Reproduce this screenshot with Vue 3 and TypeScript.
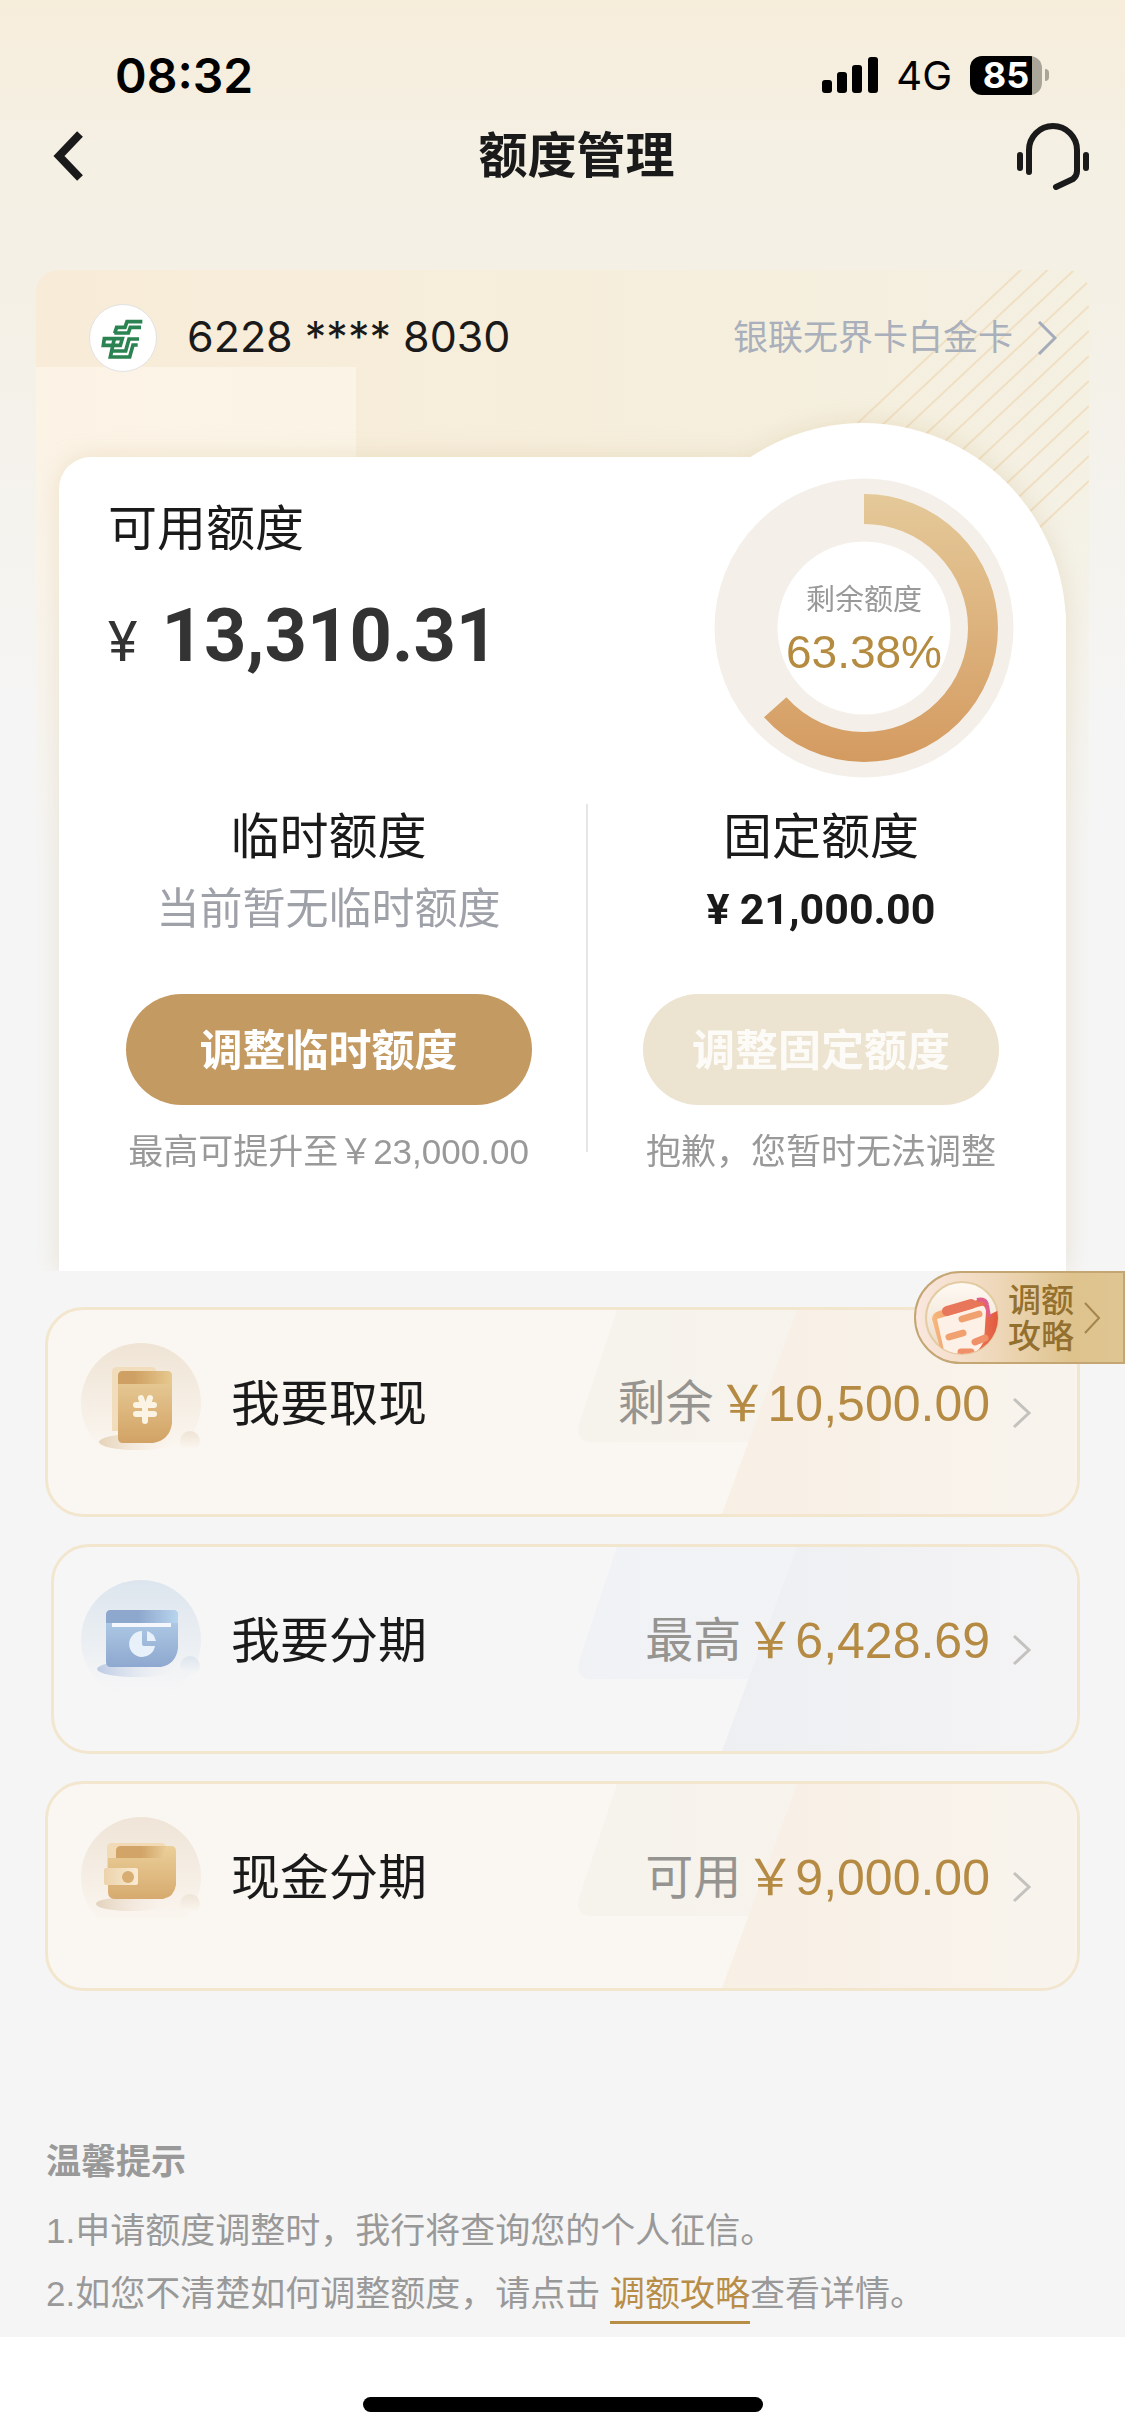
<script setup lang="ts">
import { computed, ref } from 'vue'

interface Entry {
  id: 'cash' | 'split' | 'wallet'
  title: string
  label: string
  amount: string
  tone: 'gold' | 'blue'
}

const cardNumber = ref('6228 **** 8030')
const cardName = ref('银联无界卡白金卡')
const available = ref('13,310.31')
const remaining = ref(63.38)

const entries: Entry[] = [
  { id: 'cash', title: '我要取现', label: '剩余', amount: '10,500.00', tone: 'gold' },
  { id: 'split', title: '我要分期', label: '最高', amount: '6,428.69', tone: 'blue' },
  { id: 'wallet', title: '现金分期', label: '可用', amount: '9,000.00', tone: 'gold' },
]

const rays = Array.from({ length: 12 }, (_, i) => -64 + i * 25)

const ringLength = 2 * Math.PI * 119
const ringDash = computed(() => `${(ringLength * remaining.value) / 100} ${ringLength}`)
</script>

<template>
  <div class="page">
    <div class="status">
      <span class="clock">08:32</span>
      <div class="signals">
        <svg class="bars" width="56" height="36" viewBox="0 0 56 36" aria-hidden="true">
          <rect x="0" y="23" width="10" height="13" rx="3" />
          <rect x="15" y="15" width="10" height="21" rx="3" />
          <rect x="30" y="8" width="10" height="28" rx="3" />
          <rect x="46" y="0" width="10" height="36" rx="3" />
        </svg>
        <span class="network">4G</span>
        <div class="battery">
          <span class="battery-body">85</span>
          <span class="battery-tip"></span>
        </div>
      </div>
    </div>

    <header class="nav">
      <button class="nav-back" type="button" aria-label="返回">
        <svg width="32" height="52" viewBox="0 0 32 52" aria-hidden="true">
          <path d="M28 4 L7 26 L28 48" fill="none" stroke="#1a1a1a" stroke-width="8" />
        </svg>
      </button>
      <h1 class="nav-title">额度管理</h1>
      <button class="nav-service" type="button" aria-label="客服">
        <svg width="74" height="68" viewBox="0 0 74 68" fill="none" stroke="#1a1a1a" stroke-linecap="round" stroke-linejoin="round" aria-hidden="true">
          <path d="M13 50 V28 a24 24 0 0 1 48 0 V49 q0 5 -4 8 L40 65" stroke-width="6" />
          <path d="M4 33 V46 M70 33 V46" stroke-width="6" />
        </svg>
      </button>
    </header>

    <main>
      <section class="panel">
        <svg class="rays" width="260" height="290" viewBox="0 0 260 290" aria-hidden="true">
          <line v-for="y in rays" :key="y" x1="260" :y1="y" x2="0" :y2="y + 244" stroke="#f0dfc3" stroke-width="2" />
        </svg>

        <div class="panel-head">
          <span class="bank-logo">
            <svg width="64" height="64" viewBox="20 20 192 192" fill="none" stroke="#2a8350" stroke-width="11" aria-hidden="true">
              <path d="M174 67 H128 L122 84 H97 L91 102" />
              <path d="M170 84 H138 L132 101 H90" />
              <path d="M60 118 H114 L108 138 H57 Z" />
              <path d="M164 119 H134 L124 155 H84" />
              <path d="M160 137 H146 L136 173 H78 L90 118" />
            </svg>
          </span>
          <span class="card-number">{{ cardNumber }}</span>
          <a class="card-name" href="#card">
            <span>{{ cardName }}</span>
            <svg width="20" height="34" viewBox="0 0 20 34" aria-hidden="true">
              <path d="M2 1 L18 17 L2 33" fill="none" stroke="#a4abba" stroke-width="3" />
            </svg>
          </a>
        </div>

        <div class="card">
          <div class="summary">
            <div class="summary-text">
              <h2 class="heading">可用额度</h2>
              <p class="available"><span class="yen">¥</span>{{ available }}</p>
            </div>
            <div class="ring">
              <svg class="ring-art" viewBox="0 0 300 300" aria-hidden="true">
                <defs>
                  <linearGradient id="ringFill" gradientUnits="userSpaceOnUse" x1="0" y1="0" x2="300" y2="0">
                    <stop offset="0" stop-color="#d3985d" />
                    <stop offset="1" stop-color="#e6cc9d" />
                  </linearGradient>
                </defs>
                <circle cx="150" cy="150" r="118" fill="none" stroke="#f4f0e9" stroke-width="63" />
                <circle cx="150" cy="150" r="119" fill="none" stroke="url(#ringFill)" stroke-width="30" :stroke-dasharray="ringDash" transform="rotate(-90 150 150)" />
              </svg>
              <span class="ring-label">剩余额度</span>
              <strong class="ring-value">{{ remaining }}%</strong>
            </div>
          </div>

          <div class="quotas">
            <div class="quota">
              <h2 class="heading">临时额度</h2>
              <p class="quota-empty">当前暂无临时额度</p>
              <button class="pill pill-wide" type="button">调整临时额度</button>
              <p class="quota-note">最高可提升至￥23,000.00</p>
            </div>
            <div class="divider"></div>
            <div class="quota">
              <h2 class="heading">固定额度</h2>
              <p class="quota-value"><span class="quota-yen">¥</span>21,000.00</p>
              <button class="pill" type="button" disabled>调整固定额度</button>
              <p class="quota-note">抱歉，您暂时无法调整</p>
            </div>
          </div>
        </div>
      </section>

      <section class="entries">
        <a v-for="entry in entries" :key="entry.id" class="entry" :class="entry.tone" :href="`#${entry.id}`">
          <svg class="entry-decor" width="504" height="204" viewBox="0 0 504 204" aria-hidden="true">
            <defs>
              <linearGradient :id="`${entry.id}Near`" x1="0" x2="1">
                <stop offset="0" :stop-color="entry.tone === 'gold' ? '#f6f2ec' : '#f0f2f5'" />
                <stop offset="1" :stop-color="entry.tone === 'gold' ? '#f8f4ed' : '#f4f4f5'" />
              </linearGradient>
              <linearGradient :id="`${entry.id}Far`" x1="0" x2="1">
                <stop offset="0" :stop-color="entry.tone === 'gold' ? '#f8efe5' : '#edeff2'" />
                <stop offset="1" :stop-color="entry.tone === 'gold' ? '#f8f4ed' : '#f5f4f5'" />
              </linearGradient>
            </defs>
            <path d="M44 0 L6 114 Q2 132 18 132 H504 V0 Z" :fill="`url(#${entry.id}Near)`" />
            <path d="M224 0 L149 204 H504 V0 Z" :fill="`url(#${entry.id}Far)`" />
          </svg>

          <svg v-if="entry.id === 'cash'" class="entry-icon" viewBox="0 0 120 120" aria-hidden="true">
            <defs>
              <linearGradient id="cashDisc" x2="0" y2="1"><stop stop-color="#efe4d5" /><stop offset=".8" stop-color="#f9f4ed" /><stop offset="1" stop-color="#fbf8f3" stop-opacity="0" /></linearGradient>
              <linearGradient id="cashBody" x2="0" y2="1"><stop stop-color="#e9cf9c" /><stop offset="1" stop-color="#d2a264" /></linearGradient>
              <linearGradient id="cashFlap"><stop offset=".3" stop-color="#cfa063" /><stop offset="1" stop-color="#e6c98f" /></linearGradient>
              <linearGradient id="cashShade"><stop stop-color="#e6d3b9" /><stop offset="1" stop-color="#f9ece2" stop-opacity="0" /></linearGradient>
            </defs>
            <circle cx="60" cy="60" r="60" fill="url(#cashDisc)" />
            <ellipse cx="56" cy="99" rx="38" ry="8" fill="url(#cashShade)" />
            <circle cx="109" cy="98" r="10" fill="url(#cashDisc)" />
            <path d="M36 24 H70 Q75 24 75 29 V88 H31 V29 Q31 24 36 24 Z" fill="#f1dcbc" />
            <path d="M42 28 H86 Q91 28 91 33 V80 Q89 97 72 100 H42 Q37 100 37 95 V33 Q37 28 42 28 Z" fill="url(#cashBody)" />
            <path d="M42 28 H86 Q91 28 91 33 V41 H37 V33 Q37 28 42 28 Z" fill="url(#cashFlap)" />
            <path d="M60 55 L62 61 M69 55 L67 61 M55 62 H73 M55 71 H73 M64 62 V78" fill="none" stroke="#fbf3e4" stroke-width="6" stroke-linecap="round" />
          </svg>

          <svg v-else-if="entry.id === 'split'" class="entry-icon" viewBox="0 0 120 120" aria-hidden="true">
            <defs>
              <linearGradient id="splitDisc" x2="0" y2="1"><stop stop-color="#dce5ee" /><stop offset=".7" stop-color="#f0f2f4" /><stop offset="1" stop-color="#f5f5f5" stop-opacity="0" /></linearGradient>
              <linearGradient id="splitBody" x2="0" y2="1"><stop stop-color="#b5d0ea" /><stop offset="1" stop-color="#8ea8cf" /></linearGradient>
              <linearGradient id="splitFlap"><stop offset=".45" stop-color="#8ea7cd" /><stop offset="1" stop-color="#b8d5ee" /></linearGradient>
              <linearGradient id="splitShade"><stop stop-color="#bccae4" /><stop offset="1" stop-color="#eef0f5" stop-opacity="0" /></linearGradient>
            </defs>
            <circle cx="60" cy="60" r="60" fill="url(#splitDisc)" />
            <ellipse cx="56" cy="89" rx="40" ry="8" fill="url(#splitShade)" />
            <circle cx="109" cy="86" r="10" fill="url(#splitDisc)" />
            <path d="M30 30 H92 Q97 30 97 35 V68 Q95 84 80 87 H30 Q25 87 25 82 V35 Q25 30 30 30 Z" fill="url(#splitBody)" />
            <path d="M30 30 H92 Q97 30 97 35 V43 H25 V35 Q25 30 30 30 Z" fill="url(#splitFlap)" />
            <rect x="31" y="43" width="59" height="4" fill="#f4f8fc" />
            <path d="M61 51 A13 13 0 1 0 74 66 H63 Q61 66 61 64 Z" fill="#e8f0f9" />
            <path d="M66 51 Q73 53 75 61 H66 Z" fill="#e8f0f9" />
          </svg>

          <svg v-else class="entry-icon" viewBox="0 0 120 120" aria-hidden="true">
            <defs>
              <linearGradient id="walletDisc" x2="0" y2="1"><stop stop-color="#efe4d7" /><stop offset=".8" stop-color="#f9f4ed" /><stop offset="1" stop-color="#fbf8f3" stop-opacity="0" /></linearGradient>
              <linearGradient id="walletBody" x2="0" y2="1"><stop stop-color="#ebcf99" /><stop offset="1" stop-color="#d6aa6f" /></linearGradient>
              <linearGradient id="walletSlot"><stop offset=".5" stop-color="#d2a467" /><stop offset="1" stop-color="#e9cd98" /></linearGradient>
              <linearGradient id="walletClasp"><stop stop-color="#ecd3ab" /><stop offset="1" stop-color="#f8ead3" /></linearGradient>
              <linearGradient id="walletShade"><stop stop-color="#e2d2bb" /><stop offset="1" stop-color="#f9e8e2" stop-opacity="0" /></linearGradient>
            </defs>
            <circle cx="60" cy="60" r="60" fill="url(#walletDisc)" />
            <ellipse cx="50" cy="87" rx="35" ry="7" fill="url(#walletShade)" />
            <circle cx="109" cy="87" r="10" fill="url(#walletDisc)" />
            <path d="M31 26 H80 Q85 26 85 31 V60 H26 V31 Q26 26 31 26 Z" fill="#f2dab7" />
            <path d="M27 41 H35 V34 Q35 29 40 29 H90 Q95 29 95 34 V68 Q93 80 82 82 H34 Q27 82 27 75 Z" fill="url(#walletBody)" />
            <path d="M35 41 V34 Q35 29 40 29 H86 L80 41 Z" fill="url(#walletSlot)" />
            <rect x="23" y="51" width="34" height="17" rx="2" fill="url(#walletClasp)" />
            <circle cx="47" cy="60" r="6" fill="#d8ad72" />
          </svg>

          <span class="entry-title">{{ entry.title }}</span>
          <span class="entry-label">{{ entry.label }}</span>
          <span class="entry-amount">￥{{ entry.amount }}</span>
          <svg class="entry-arrow" width="20" height="32" viewBox="0 0 20 32" aria-hidden="true">
            <path d="M2 2 L17 16 L2 30" fill="none" stroke="#c4c2be" stroke-width="3" />
          </svg>
        </a>

        <a class="guide" href="#guide">
          <svg class="guide-icon" viewBox="0 0 74 74" aria-hidden="true">
            <defs>
              <linearGradient id="guideDisc" x2="0" y2="1"><stop stop-color="#fffaf5" /><stop offset="1" stop-color="#ead9c4" /></linearGradient>
              <linearGradient id="guideSheet"><stop stop-color="#f7b97e" /><stop offset="1" stop-color="#e2573f" /></linearGradient>
              <clipPath id="guideClip"><circle cx="37" cy="37" r="36" /></clipPath>
            </defs>
            <circle cx="37" cy="37" r="36" fill="url(#guideDisc)" stroke="#e3cba2" stroke-width="2" />
            <g clip-path="url(#guideClip)">
              <path d="M52 19 Q61 17 62 24 L64 34 L74 29 V56 L58 74 H17 L7 38 Q7 32 14 30 Z" fill="url(#guideSheet)" />
              <path d="M52 19 Q61 17 62 24 L64 36" fill="none" stroke="#e0608a" stroke-width="4" />
              <path d="M12 38 L56 25 Q60 24 61 30 L59 60 Q52 74 44 74 H20 Z" fill="#fdf1e7" />
              <g fill="none" stroke-linecap="round">
                <path d="M22 30 L46 23" stroke="#e8765a" stroke-width="10" />
                <path d="M37 38 L54 33 M24 56 L38 52" stroke="#f1a070" stroke-width="7" />
                <path d="M50 61 L60 57 M36 71 L46 71" stroke="#ef9068" stroke-width="7" />
              </g>
            </g>
          </svg>
          <span class="guide-text">调额<br />攻略</span>
          <svg width="18" height="32" viewBox="0 0 18 32" aria-hidden="true">
            <path d="M2 1 L16 16 L2 31" fill="none" stroke="#a3854d" stroke-width="2" />
          </svg>
        </a>
      </section>

      <section class="tips">
        <h3 class="tips-title">温馨提示</h3>
        <p>1.申请额度调整时，我行将查询您的个人征信。</p>
        <p>2.如您不清楚如何调整额度，请点击 <a href="#guide">调额攻略</a>查看详情。</p>
      </section>
    </main>

    <footer class="home"><span class="home-bar"></span></footer>
  </div>
</template>

<style>
body {
  background: #fff;
}
</style>

<style scoped>
.page {
  font-family: "Liberation Sans", "Noto Sans CJK SC", sans-serif;
  color: #1a1a1a;
  background: linear-gradient(#f7eddb 0, #f4f0e4 160px, #f4f0e5 280px, #f5f5f5 720px);
}

h1, h2, h3, p {
  margin: 0;
  font-weight: 400;
}

a {
  color: inherit;
  text-decoration: none;
}

button {
  padding: 0;
  border: 0;
  background: none;
  font-family: inherit;
}

.status {
  display: flex;
  align-items: center;
  justify-content: space-between;
  height: 66px;
  padding: 42px 76px 0 115px;
  font-family: Inter, sans-serif;
  color: #000;
}

.clock {
  font-size: 48px;
  font-weight: 600;
}

.signals {
  display: flex;
  align-items: center;
  gap: 18px;
}

.network {
  font-size: 40px;
}

.battery {
  display: flex;
  align-items: center;
  gap: 3px;
}

.battery-body {
  width: 72px;
  height: 39px;
  border-radius: 12px;
  background: linear-gradient(90deg, #000 62px, #aaa599 62px);
  color: #fff;
  font-size: 36px;
  font-weight: 700;
  line-height: 39px;
  text-align: center;
}

.battery-tip {
  width: 4px;
  height: 12px;
  border-radius: 0 4px 4px 0;
  background: #aaa599;
}

.nav {
  display: flex;
  align-items: center;
  height: 96px;
}

.nav-back {
  width: 128px;
  height: 96px;
  padding-left: 52px;
  text-align: left;
}

.nav-back svg,
.nav-service svg {
  display: block;
}

.nav-title {
  flex: 1;
  font-size: 49px;
  font-weight: 700;
  line-height: 72px;
  text-align: center;
}

.nav-service {
  width: 100px;
  padding-right: 26px;
}

.nav-service svg {
  margin-left: -9px;
}

.panel {
  position: relative;
  margin: 66px 36px 0;
  padding: 0 23px;
  overflow: hidden;
  border-radius: 22px 22px 0 0;
  background:
    linear-gradient(rgba(245, 245, 245, 0) 160px, #f5f5f5 600px),
    linear-gradient(rgba(255, 250, 242, 0.5), rgba(255, 250, 242, 0.5)) 0 97px / 320px 100% no-repeat,
    linear-gradient(90deg, #f8ecd8, #f6eedb 50%, #f4f0e2);
}

.rays {
  position: absolute;
  top: 0;
  right: 0;
}

.panel-head {
  position: relative;
  display: flex;
  align-items: center;
  height: 136px;
  margin-bottom: 51px;
  padding: 0 9px 0 30px;
}

.bank-logo {
  display: flex;
  align-items: center;
  justify-content: center;
  width: 66px;
  height: 66px;
  border: 1px solid #e2e2e2;
  border-radius: 50%;
  background: #fff;
}

.card-number {
  flex: 1;
  margin-left: 30px;
  padding-bottom: 4px;
  font-family: Inter, sans-serif;
  font-size: 43px;
}

.card-name {
  display: flex;
  align-items: center;
  gap: 24px;
  color: #a9afbb;
  font-size: 35px;
}

.card-name span {
  padding-bottom: 8px;
}

.card {
  position: relative;
  border-radius: 32px 203px 0 0 / 32px 169px 0 0;
  background: #fff;
  filter: drop-shadow(0 0 12px rgba(190, 160, 90, 0.22));
}

.card::before {
  content: "";
  position: absolute;
  top: -34px;
  right: 0;
  width: 406px;
  height: 406px;
  border-radius: 50%;
  background: #fff;
}

.summary {
  position: relative;
  display: flex;
  justify-content: space-between;
  padding: 21px 52px 26px 49px;
}

.summary-text {
  padding-top: 18px;
}

.heading {
  font-size: 49px;
  line-height: 66px;
}

.available {
  margin-top: 26px;
  color: #333;
  font-family: Roboto, sans-serif;
  font-size: 74px;
  font-weight: 700;
  line-height: 96px;
}

.yen {
  margin-right: 24px;
  font-size: 56px;
  font-weight: 400;
}

.ring {
  position: relative;
  display: flex;
  flex-direction: column;
  align-items: center;
  justify-content: center;
  width: 300px;
  height: 300px;
}

.ring-art {
  position: absolute;
  inset: 0;
}

.ring-label {
  position: relative;
  color: #999;
  font-size: 29px;
  line-height: 48px;
}

.ring-value {
  position: relative;
  color: #b58b40;
  font-size: 46px;
  font-weight: 400;
  line-height: 56px;
}

.quotas {
  position: relative;
  display: grid;
  grid-template-columns: minmax(0, 21fr) 2px minmax(0, 19fr);
  padding: 0 12px 95px;
}

.quota {
  display: flex;
  flex-direction: column;
  align-items: center;
}

.divider {
  margin-bottom: 24px;
  background: #e6e6e6;
}

.quota-empty,
.quota-value {
  margin: 9px 0 55px;
  line-height: 60px;
}

.quota-empty {
  color: #9fa1a9;
  font-size: 43px;
}

.quota-value {
  font-family: Roboto, sans-serif;
  font-size: 43px;
  font-weight: 700;
}

.quota-yen {
  margin-right: 10px;
}

.pill {
  width: 356px;
  height: 111px;
  padding-bottom: 6px;
  border-radius: 56px;
  background: #c49a63;
  color: #fff;
  font-size: 43px;
  font-weight: 700;
}

.pill-wide {
  width: 406px;
}

.pill:disabled {
  background: #ece3d0;
  color: #fdfbf7;
}

.quota-note {
  margin-top: 23px;
  color: #999;
  font-size: 35px;
  line-height: 48px;
}

.entries {
  position: relative;
  display: flex;
  flex-direction: column;
  gap: 27px;
  padding: 36px 45px 0;
}

.entry {
  position: relative;
  display: flex;
  align-items: center;
  height: 118px;
  padding: 34px 45px 52px 33px;
  overflow: hidden;
  border: 3px solid #f2e6cf;
  border-radius: 38px;
  background: #faf7f2;
}

.entry.blue {
  margin-left: 6px;
  padding-left: 27px;
  background: #f6f6f7;
}

.entry > * {
  position: relative;
}

.entry > .entry-decor {
  position: absolute;
  top: 0;
  right: 0;
}

.entry-icon {
  width: 120px;
  height: 120px;
}

.entry-title,
.entry-label,
.entry-amount {
  padding-bottom: 8px;
}

.entry-title {
  flex: 1;
  margin-left: 30px;
  font-size: 49px;
}

.entry-label {
  margin-right: 4px;
  color: #969490;
  font-size: 48px;
}

.entry-amount {
  margin-right: 22px;
  color: #b58b43;
  font-size: 50px;
}

.entry-arrow {
  margin-top: 20px;
}

.guide {
  position: absolute;
  top: 0;
  right: 0;
  display: flex;
  align-items: center;
  gap: 9px;
  height: 89px;
  padding: 0 22px 0 9px;
  border: 2px solid #c3a673;
  border-radius: 47px 0 0 47px;
  background: linear-gradient(90deg, #fae7de, #eed7b8 40%, #dec38d 75%, #dfc592);
  color: #94702f;
}

.guide-icon {
  width: 74px;
  height: 74px;
}

.guide-text {
  padding-top: 2px;
  font-size: 33px;
  font-weight: 500;
  line-height: 36px;
}

.tips {
  margin-top: 139px;
  padding: 0 46px 12px;
  color: #999;
  font-size: 35px;
  line-height: 63px;
}

.tips-title {
  margin-bottom: 6px;
  font-size: 35px;
  font-weight: 700;
}

.tips a {
  padding-bottom: 8px;
  border-bottom: 3px solid #b88d48;
  color: #b88d48;
}

.home {
  display: flex;
  justify-content: center;
  padding: 60px 0 23px;
  background: #fff;
}

.home-bar {
  width: 400px;
  height: 15px;
  border-radius: 8px;
  background: #000;
}
</style>
